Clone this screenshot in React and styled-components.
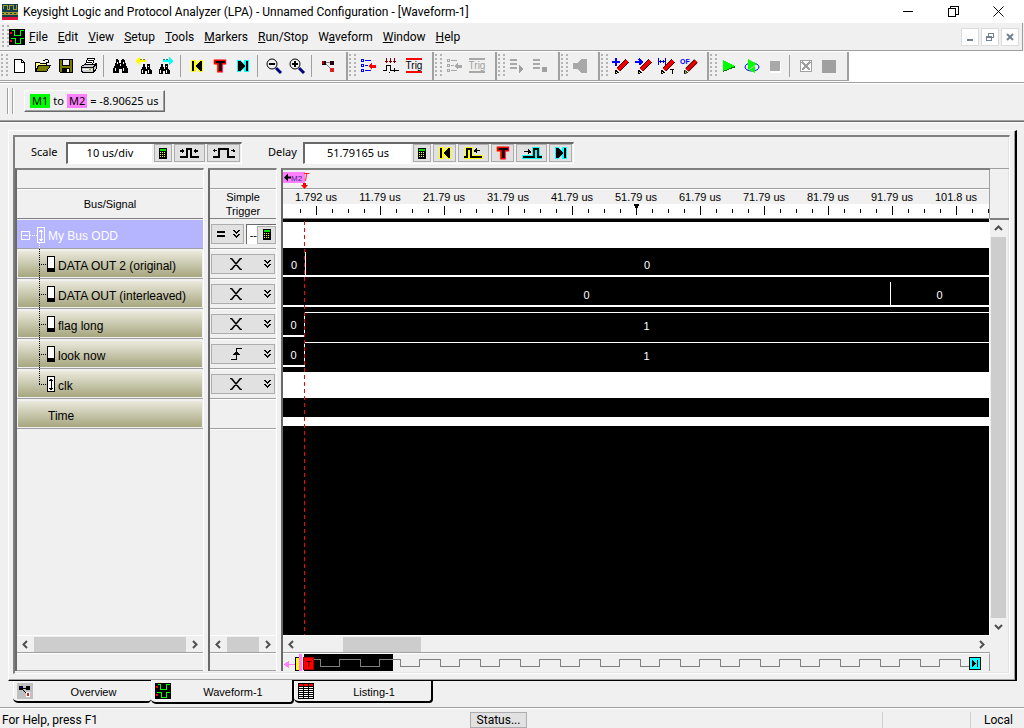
import React from "react";
import styled, { createGlobalStyle, css } from "styled-components";

const ui = 'Roboto, "Open Sans", sans-serif';
const tahoma = '"Noto Sans", "Open Sans", sans-serif';
const arial = '"Liberation Sans", Arial, sans-serif';

const Global = createGlobalStyle`
  * { box-sizing: border-box; }
  body { margin: 0; background: #f0f0f0; font: 12px/16px ${ui}; color: #000; }
  button, input { font: inherit; color: inherit; margin: 0; padding: 0; border: 0; border-radius: 0; }
`;

const Page = styled.div`
  display: flex;
  flex-direction: column;
  min-height: 100vh;
  background: #f0f0f0;
`;

/* ---------- title and menu ---------- */
const TitleBar = styled.header`
  display: flex;
  align-items: center;
  height: 23px;
  padding-left: 2px;
  background: #fff;
`;
const TitleText = styled.h1`
  flex: 1;
  margin: 0 0 0 5px;
  font-size: 12px;
  font-weight: 400;
  white-space: nowrap;
`;
const CaptionButton = styled.button`
  display: grid;
  place-items: center;
  width: 45px;
  height: 22px;
  background: none;
`;
const CaptionSet = styled.div`
  display: flex;
  margin-right: 3px;
`;
const MenuBar = styled.nav`
  display: flex;
  align-items: center;
  height: 28px;
  margin-right: 1px;
  padding-left: 2px;
  border-right: 1px solid #a0a0a0;
  border-bottom: 1px solid #a0a0a0;
`;
const MenuSet = styled.div`
  display: flex;
  flex: 1;
  gap: 10px;
  margin-left: 4px;
`;
const MenuItem = styled.button`
  background: none;
  white-space: nowrap;
`;
const MdiSet = styled.div`
  display: flex;
  gap: 2px;
  margin-right: 3px;
`;
const MdiButton = styled.button`
  display: grid;
  place-items: center;
  width: 18px;
  height: 18px;
  background: #fff;
  border: 1px solid #dcdcdc;
`;
const Grip = styled.span`
  flex: none;
  width: 7px;
  height: 24px;
  background: radial-gradient(circle at 1px 1px, #b4b4b4 1px, transparent 1px) 0 0 / 5px 4px;
`;

/* ---------- toolbars ---------- */
const Toolbars = styled.div`
  display: flex;
  height: 32px;
  background: #fff;
  border-bottom: 1px solid #a0a0a0;
`;
const Toolbar = styled.div`
  display: flex;
  align-items: center;
  flex: none;
  height: 29px;
  padding: 0 7px 0 1px;
  margin-top: 1px;
  background: #f0f0f0;
  border-right: 2px solid #a0a0a0;
  border-bottom: 1px solid #a0a0a0;
`;
const ToolButton = styled.button`
  display: grid;
  place-items: center;
  width: 23px;
  height: 24px;
  background: none;
`;
const Separator = styled.span`
  width: 1px;
  height: 22px;
  margin: 0 4px 0 3px;
  background: #a0a0a0;
`;
const MarkerBar = styled.div`
  display: flex;
  align-items: center;
  height: 38px;
  padding: 0 0 2px 7px;
  border-top: 1px solid #fff;
  border-bottom: 1px solid #a0a0a0;
  box-shadow: 0 1px #696969, 0 2px #fff;
`;
const DoubleBar = styled.span`
  width: 6px;
  height: 26px;
  border: solid #a0a0a0;
  border-width: 0 1px;
  box-shadow: inset 1px 0 #fff, 1px 0 #fff;
`;
const MarkerButton = styled.button`
  display: flex;
  align-items: center;
  gap: 3px;
  height: 22px;
  margin-left: 11px;
  padding: 0 5px;
  font: 11px/14px ${tahoma};
  background: #f0f0f0;
  border: 1px solid #fff;
  border-right: 1px solid #696969;
  border-bottom: 1px solid #696969;
  box-shadow: inset -1px -1px #a0a0a0;
  white-space: nowrap;
`;
const Tag = styled.span`
  padding: 0 2px;
  background: ${(p) => p.$color};
`;

/* ---------- document frame ---------- */
const Work = styled.main`
  display: flex;
  flex: 1;
  flex-direction: column;
  padding: 9px 7px 0 8px;
`;
const Frame = styled.section`
  display: flex;
  flex: 1;
  flex-direction: column;
  padding: 4px 5px 6px 4px;
  border: 1px solid #fff;
  border-right: 2px solid #000;
  border-bottom: 1px solid #000;
  box-shadow: inset -1px -1px #a0a0a0;
`;
const Panel = styled.div`
  display: flex;
  flex: 1;
  flex-direction: column;
  border: 2px solid #696969;
  border-top-color: #808080;
  border-left-color: #808080;
  border-right: 1px solid #fff;
  border-bottom: 1px solid #fff;
  box-shadow: inset -1px -1px #e3e3e3;
`;
const Controls = styled.div`
  display: flex;
  align-items: center;
  height: 31px;
  padding-left: 16px;
  font: 11px/14px ${tahoma};
`;
const Label = styled.label`
  width: 35px;
  padding-bottom: 2px;
`;
const FieldBox = styled.div`
  display: flex;
  align-items: center;
  gap: 2px;
  height: 22px;
  margin-right: 26px;
  padding: 1px;
  border: 1px solid #fff;
  border-top: 2px solid #696969;
  border-left: 2px solid #696969;
`;
const Field = styled.input`
  width: ${(p) => p.$w}px;
  height: 19px;
  margin: -1px 0 -1px -1px;
  padding-bottom: 2px;
  background: #fff;
  text-align: center;
`;
const SmallButton = styled.button`
  display: grid;
  place-items: center;
  flex: none;
  width: ${(p) => p.$w}px;
  height: 18px;
  background: #e1e1e1;
  border: 1px solid #adadad;
`;

/* ---------- three panes ---------- */
const Panes = styled.div`
  display: flex;
  flex: 1;
  padding-bottom: 2px;
`;
const Pane = styled.div`
  display: flex;
  flex-direction: column;
  flex: ${(p) => (p.$w ? `0 0 ${p.$w}px` : "1 1 0")};
  min-width: 0;
  margin-right: ${(p) => (p.$w ? 4 : 0)}px;
  border-top: 2px solid #808080;
  border-left: 2px solid #696969;
  border-right: ${(p) => (p.$w ? "1px solid #fff" : "0")};
`;
const Strip = styled.div`
  position: relative;
  height: 19px;
  border-bottom: 1px solid #a0a0a0;
`;
const Heading = styled.div`
  display: grid;
  place-items: center;
  height: 30px;
  border-top: 1px solid #fff;
  border-bottom: 1px solid #808080;
  font: 11px/14px ${arial};
  text-align: center;
`;
const Rows = styled.div`
  flex: 1;
`;
const SignalRow = styled.div`
  display: flex;
  align-items: center;
  height: 30px;
  padding: ${(p) => (p.$selected ? "1px 0 0" : "2px 1px 1px")};
  border-bottom: 1px solid #a0a0a0;
  background-clip: content-box;
  background-color: ${(p) => (p.$selected ? "#b4b4ff" : "transparent")};
  background-image: ${(p) => (p.$selected ? "none" : "linear-gradient(#f0efe4, #a3a37b)")};
  color: ${(p) => (p.$selected ? "#fff" : "#000")};
  font: 12px/16px ${arial};
  white-space: nowrap;
  overflow: hidden;
`;
const SignalName = styled.span`
  padding-top: 3px;
`;
const Tree = styled.svg`
  flex: none;
  height: 30px;
  width: ${(p) => p.$w}px;
  margin-left: ${(p) => (p.$flush ? 0 : -1)}px;
  shape-rendering: crispEdges;
`;
const TriggerRow = styled.div`
  display: flex;
  align-items: center;
  gap: 2px;
  height: 30px;
  padding: 1px 0 0 1px;
  border-bottom: 1px solid #a0a0a0;
  box-shadow: 0 1px #fff;
`;
const TriggerButton = styled.button`
  display: flex;
  align-items: center;
  justify-content: flex-end;
  gap: ${(p) => (p.$w < 40 ? 7 : 22)}px;
  width: ${(p) => p.$w}px;
  height: 20px;
  padding-right: 3px;
  background: #e1e1e1;
  border: 1px solid #adadad;
`;
const TriggerValue = styled.div`
  display: flex;
  align-items: center;
  flex: 1;
  height: 20px;
  background: #fff;
  border-top: 1px solid #696969;
  border-left: 1px solid #696969;
`;
const TinyInput = styled.input`
  width: 10px;
  background: #fff;
  font: 11px/14px ${arial};
  text-align: right;
`;
const ScrollBar = styled.div`
  display: flex;
  align-items: center;
  height: 18px;
  border-top: 1px solid #fff;
  border-bottom: 1px solid #a0a0a0;
`;
const ScrollArrow = styled.button`
  display: grid;
  place-items: center;
  flex: none;
  width: 17px;
  height: 17px;
  background: none;
`;
const Track = styled.div`
  flex: 1;
  height: 15px;
  padding-left: ${(p) => p.$start || 0}px;
`;
const Thumb = styled.div`
  width: ${(p) => (p.$w ? `${p.$w}px` : "100%")};
  height: 100%;
  background: #cdcdcd;
`;
const Foot = styled.div`
  height: 18px;
  border-top: 1px solid #fff;
  border-bottom: 1px solid #a0a0a0;
`;

/* ---------- waveform ---------- */
const WaveHead = styled.div`
  border-right: 1px solid #a0a0a0;
`;
const RulerLabels = styled.div`
  display: flex;
  height: 15px;
  padding-left: 1px;
  overflow: hidden;
  border-top: 1px solid #fff;
  font: 11px/14px ${arial};
`;
const RulerLabel = styled.span`
  flex: 0 0 64px;
  text-align: center;
  white-space: nowrap;
`;
const Ticks = styled.svg`
  display: block;
  width: 100%;
  height: 14px;
  background: #fff;
  shape-rendering: crispEdges;
`;
const MarkerFlag = styled.svg`
  position: absolute;
  left: 0;
  top: 2px;
  z-index: 1;
`;
const Plot = styled.div`
  position: relative;
  flex: 1;
  background: #000;
  border-top: 1px solid #808080;
  border-right: 1px solid #fff;
`;
const TriggerLine = styled.div`
  position: absolute;
  left: 21px;
  top: 2px;
  bottom: 0;
  width: 1px;
  background: repeating-linear-gradient(#f00 0 4px, transparent 4px 7px);
`;
const Lane = styled.div`
  display: flex;
  height: ${(p) => (p.$first ? 29 : 30)}px;
  padding-top: ${(p) => (p.$first ? 3 : 4)}px;
`;
const Segment = styled.div`
  flex: ${(p) => (p.$w ? `0 0 ${p.$w}` : "1 1 0")};
  height: 25px;
  font: 11px/26px ${arial};
  text-align: center;
  color: #fff;
  ${(p) => p.$edge && css`box-shadow: inset 1px 0 #fff;`}
  ${(p) => (p.$level === "high"
    ? css`border-top: 1px solid #fff;`
    : css`border-bottom: 2px solid #fff;`)}
`;
const FullBand = styled.div`
  flex: 1;
  height: 26px;
  background: #fff;
`;
const TimeBand = styled.div`
  height: 9px;
  margin-top: 19px;
  background: #fff;
`;
const OverviewStrip = styled.div`
  display: flex;
  height: 18px;
  border-right: 1px solid #a0a0a0;
  border-top: 1px solid #fff;
`;
const EndMark = styled.button`
  flex: none;
  width: 12px;
  height: 13px;
  margin: 3px 8px 0 0;
  background: none;
  line-height: 0;
`;
const Side = styled.div`
  display: flex;
  flex-direction: column;
  flex: 0 0 19px;
`;
const SideHead = styled.div`
  height: 52px;
  border-top: 1px solid #a0a0a0;
  border-bottom: 2px solid #808080;
`;
const VScroll = styled.div`
  display: flex;
  flex: 1;
  flex-direction: column;
  align-items: center;
  width: 17px;
`;
const VThumb = styled.div`
  flex: 1;
  width: 15px;
  background: #cdcdcd;
`;
const SideFoot = styled.div`
  height: 36px;
`;

/* ---------- tabs and status ---------- */
const Tabs = styled.div`
  display: flex;
  align-items: flex-start;
  height: 26px;
  padding-left: 5px;
`;
const Tab = styled.button`
  display: flex;
  align-items: center;
  width: ${(p) => p.$w}px;
  height: ${(p) => (p.$active ? 24 : 22)}px;
  margin-top: ${(p) => (p.$active ? -1 : 0)}px;
  padding-left: 4px;
  background: #f0f0f0;
  border: solid #000;
  border-width: 0 ${(p) => (p.$flat ? 0 : 2)}px 2px 0;
  border-radius: 0 0 4px 5px;
  box-shadow: inset 1px 0 #fff;
  font: 11px/16px ${arial};
`;
const TabText = styled.span`
  flex: 1;
  padding: 1px 0 0 3px;
  text-align: center;
`;
const StatusBar = styled.footer`
  display: flex;
  align-items: center;
  height: 21px;
  border-top: 1px solid #a0a0a0;
  box-shadow: inset 0 1px #fff;
  white-space: nowrap;
`;
const StatusCell = styled.div`
  flex: ${(p) => (p.$w ? `0 0 ${p.$w}px` : "1 1 0")};
  height: 16px;
  padding-left: 2px;
  margin-top: 3px;
  border-left: ${(p) => (p.$line ? "1px solid #d0d0d0" : "0")};
  text-align: ${(p) => (p.$line ? "center" : "left")};
`;
const StatusButton = styled.button`
  width: 57px;
  height: 16px;
  margin-top: 3px;
  background: #e1e1e1;
  border: 1px solid #adadad;
  line-height: 14px;
`;

/* ---------- drawings ---------- */
const Pic = ({ w = 18, h = 18, children, soft }) => (
  <svg width={w} height={h} viewBox={`0 0 ${w} ${h}`} shapeRendering={soft ? "auto" : "crispEdges"} fill="none" aria-hidden="true">
    {children}
  </svg>
);

const WaveIcon = () => (
  <Pic w={16} h={16}>
    <path fill="#000" d="M0 0h16v16H0z" />
    <path fill="#f00" d="M1 3h2v2H1zM1 11h2v2H1z" />
    <path stroke="#0f0" d="M3 1.500h2.500v5h6v-5H15M2 9.500h4.500v5h5v-5H15" />
  </Pic>
);
const AppIcon = () => (
  <Pic w={16} h={16}>
    <path fill="#123f4c" d="M0 0h16v13H0z" />
    <path fill="#e0173d" d="M0 13h16v3H0z" />
    <path stroke="#a8982c" d="M1.500 5V1.500h4v4h2v-4h4v4h3V1M0 8.500h2l2 2h2l2-2h2l2 2h2l2-2M0 10.500h2l2-2h2l2 2h2l2-2h2l2 2" />
  </Pic>
);
const Binoc = ({ x = 0, y = 0, s = 1 }) => (
  <g transform={`translate(${x} ${y}) scale(${s})`}>
    <path fill="#000" d="M5 2h2v1h1v3h2V3h1V2h2v1h1v3h1v3h1v2h1v5h-6v-4H8v4H2v-5h1V9h1V6h1z" />
    <path fill="#f0f0f0" d="M6 5h1v2H6zM12 5h1v2h-1zM4 11h1v3H4zM12 11h1v3h-1zM9 7h1v2H9z" />
  </g>
);
const Skip = ({ c, flip }) => (
  <Pic w={14} h={14}>
    <g transform={flip ? "translate(14 0) scale(-1 1)" : undefined}>
      <path fill={c} d="M1 1h5v3l4-3h3v12h-3l-4-3v3H1z" />
      <path fill="#000" d="M2 2h2v10H2zM5 7l5-5h2v10h-2z" />
    </g>
  </Pic>
);
const RedT = () => (
  <Pic w={16} h={16} soft>
    <text x="8" y="13" textAnchor="middle" fontFamily="DejaVu Sans" fontWeight="700" fontSize="14" fill="#000" stroke="#f00" strokeWidth="3" paintOrder="stroke">T</text>
  </Pic>
);
const Zoom = ({ plus }) => (
  <Pic soft>
    <circle cx="7" cy="7" r="5" stroke="#000" />
    <path stroke="#00007b" strokeWidth="3" d="M11 11l5 5" />
    <path stroke="#000" strokeWidth="2" d={plus ? "M4 7h6M7 4v6" : "M4 7h6"} />
  </Pic>
);
const NodesIcon = () => (
  <Pic w={16} h={16}>
    <path stroke="#808080" d="M5 4.500h5M5 5l6 6" />
    <path fill="#200010" d="M2 3h4v4H2zM10 3h4v4h-4z" />
    <path fill="#a00" d="M2 3h2v3H2z" />
    <path fill="#e02020" d="M10 10h4v4h-4z" />
  </Pic>
);
const ListArrow = ({ off }) => (
  <Pic>
    <path stroke={off ? "#a8a8a8" : "#00f"} d="M2.500 2.500h2v2h-2zM2.500 7.500h2v2h-2zM2.500 12.500h2v2h-2zM6 3.500h6M6 8.500h3M6 13.500h6" />
    <path fill={off ? "#a8a8a8" : "#f00"} d="M9 9l4-3v2h4v3h-4v2z" />
  </Pic>
);
const Trig = ({ off }) => (
  <Pic soft>
    <path fill={off ? "#a8a8a8" : "#f00"} d="M1 1h16v2H1zM1 14h16v2H1z" />
    <text x="9" y="12" textAnchor="middle" fontFamily="Liberation Sans" fontSize="10" fill={off ? "#a0a0a0" : "#000"}>Trig</text>
  </Pic>
);
const Edges = () => (
  <Pic>
    <path fill="#7b0000" d="M4 1h1v3h1v1H5v1H4V5H3V4h1zM8 1h1v3h1v1H9v1H8V5H7V4h1zM12 1h1v3h1v1h-1v1h-1V5h-1V4h1z" />
    <path stroke="#000" d="M1 13.500h3.500v-5h4v5H17M7 15.500h1M12.500 11v4" />
  </Pic>
);
const ListRun = ({ stop }) => (
  <Pic>
    <path fill="#a8a8a8" d="M2 2h7v2H2zM2 6h7v2H2zM2 10h7v2H2z" />
    <path fill="#a0a0a0" d={stop ? "M11 10h5v5h-5z" : "M11 8l5 4-5 4z"} />
  </Pic>
);
const Pencil = () => (
  <g>
    <path stroke="#500" strokeWidth="5" d="M7 13l9-9" />
    <path stroke="#e00" strokeWidth="3" d="M7 13l9-9" />
    <path fill="#ff0" stroke="#000" d="M4.500 16.500v-3l2 1 1 1z" />
  </g>
);
const Calc = () => (
  <Pic w={8} h={11}>
    <path fill="#000" d="M0 0h8v11H0z" />
    <path fill="#0d0" d="M1 1h6v2H1z" />
    <path fill="#ff0" d="M1 4h1v1H1zM3 4h1v1H3zM5 4h1v1H5zM1 6h1v1H1zM3 6h1v1H3zM5 6h1v1H5zM1 8h1v1H1zM3 8h1v1H3zM5 8h1v1H5z" />
  </Pic>
);
const PulseIcon = ({ wide }) => (
  <Pic w={24} h={12}>
    {wide ? (
      <>
        <path stroke="#000" strokeWidth="2" d="M1 10h6V2h9v8h7" />
        <path fill="#000" d="M0 4l3-2v1h2v1H3v1zM24 4l-3-2v1h-2v1h2v1z" />
      </>
    ) : (
      <>
        <path stroke="#000" strokeWidth="2" d="M2 10h7M9 11V2h4v9M13 10h8" />
        <path fill="#000" d="M7 4L4 2v1H2v2h2v1zM15 4l3-2v1h2v2h-2v1z" />
      </>
    )}
  </Pic>
);
const SnapIcon = ({ c, right }) => (
  <Pic w={22} h={14}>
    <path stroke={c} strokeWidth="4" d={right ? "M1 11h12V3h4v8h4" : "M1 11h3V3h4v8h12"} />
    <path stroke="#000" strokeWidth="2" d={right ? "M2 11h11V3h4v8h4" : "M1 11h3V3h4v8h11"} />
    <path fill="#000" d={right ? "M3 5h4V3l4 3-4 2V6H3z" : "M17 4h-3V2l-4 3 4 2V5h3z"} />
  </Pic>
);
const Chevrons = () => (
  <Pic w={7} h={9}>
    <path fill="#000" d="M0 0h2v1h1v1h1V1h1V0h2v1H6v1H5v1H4v1H3V3H2V2H1V1H0zM0 4h2v1h1v1h1V5h1V4h2v1H6v1H5v1H4v1H3V7H2V6H1V5H0z" />
  </Pic>
);
const Cross = () => (
  <Pic w={12} h={12} soft><path stroke="#000" strokeWidth="1.500" d="M1.500 .5L10.500 11.500M10.500 .5L1.500 11.500M0 .5h2.500M9.500 .5H12M0 11.500h2.500M9.500 11.500H12" /></Pic>
);
const Rising = () => (
  <Pic w={12} h={12}><path stroke="#000" d="M1 11.500h5.500v-11H12" /><path fill="#000" d="M3 7h7L6.500 3z" /></Pic>
);
const Equals = () => (
  <Pic w={9} h={8}><path fill="#000" d="M0 1h8v2H0zM0 5h8v2H0z" /></Pic>
);
const Arrow = ({ d }) => (
  <Pic w={9} h={9} soft>
    <path stroke="#505050" strokeWidth="2" d={{ left: "M6 1L2.500 4.500 6 8", right: "M3 1l3.500 3.500L3 8", up: "M1 6l3.500-3.500L8 6", down: "M1 3l3.500 3.500L8 3" }[d]} />
  </Pic>
);
const BusBox = ({ x, y, color, arrow, fill = "none" }) => (
  <g>
    <path stroke={color} fill={fill} d={`M${x + 0.5} ${y + 0.5}h7v15h-7z`} />
    {arrow ? (
      <path stroke={color} d={`M${x + 4} ${y + 3}v11M${x + 2} ${y + 4.5}h4M${x + 3} ${y + 3.5}h2M${x + 2} ${y + 12.5}h4M${x + 3} ${y + 13.5}h2`} />
    ) : (
      <path fill={color} d={`M${x} ${y + 12}h8v4h-8z`} />
    )}
  </g>
);
const NodesTab = () => (
  <Pic w={16} h={16}>
    <path fill="#c0c0c0" d="M0 0h16v16H0z" />
    <path stroke="#000" d="M5 5.500h5M5 6l5 5" />
    <path fill="#000" d="M2 3h4v4H2zM9 3h4v4H9z" />
    <path fill="#00a" d="M3 4h2v1H3z" />
    <path fill="#e02020" stroke="#fff" d="M9.500 9.500h3v4h-3z" />
  </Pic>
);
const FindStep = ({ next }) => (
  <Pic>
    <path fill={next ? "#0ff" : "#ff0"} d={next ? "M6 3h6V0l5 4-5 4V5H6z" : "M12 3H6V0L1 4l5 4V5h6z"} />
    <path stroke={next ? "#088" : "#880"} strokeDasharray="2 1" d="M6 2.500h6" />
    <Binoc x={next ? 0 : 5} y={5} s={0.75} />
  </Pic>
);

/* ---------- data ---------- */
const menus = [["", "F", "ile"], ["", "E", "dit"], ["", "V", "iew"], ["", "S", "etup"], ["", "T", "ools"], ["", "M", "arkers"], ["", "R", "un/Stop"], ["W", "a", "veform"], ["", "W", "indow"], ["", "H", "elp"]];

const tools = [
  [
    ["New", <Pic key="i"><path fill="#fff" stroke="#000" d="M3.500 2.500h7l3 3v10h-10zM10.500 2.500v3h3" /></Pic>],
    ["Open", <Pic key="i"><path fill="#ffff84" stroke="#000" d="M1.500 14.500v-9h4l1 1h6v2" /><path fill="#7b7b00" stroke="#000" d="M1.500 14.500l3-6h12l-4 6z" /><path stroke="#000" d="M9 3.500h2M11 2.500h3M14.500 3v3M12 5.500h3" /></Pic>],
    ["Save", <Pic key="i"><path fill="#7b7b00" stroke="#000" d="M2.500 2.500h13v13h-12l-1-1z" /><path fill="#f0f0f0" stroke="#000" d="M5.500 2.500h7v6h-7z" /><path fill="#000" d="M5 11h8v5H5z" /><path fill="#fff" d="M10 12h2v3h-2z" /></Pic>],
    ["Print", <Pic key="i"><path fill="#fff" stroke="#000" d="M5.500 7.500l2-6h7l-2 6z" /><path stroke="#000" d="M8 3.500h5M7 5.500h5" /><path fill="#ccc" stroke="#000" d="M1.500 9.500l3-2h10l2-1v5l-3 4h-11l-1-2zM2 10.500h11M13.500 15v-5l3-3" /><path stroke="#fff" d="M3 12.500h9" /><path stroke="#990" d="M9 12.500h2" /></Pic>],
    null,
    ["Find", <Pic key="i"><Binoc /></Pic>],
    ["Find previous", <FindStep key="i" />],
    ["Find next", <FindStep key="i" next />],
    null,
    ["Go to start", <Skip key="i" c="#ff0" />],
    ["Go to trigger", <RedT key="i" />],
    ["Go to end", <Skip key="i" c="#0ff" flip />],
    null,
    ["Zoom out", <Zoom key="i" />],
    ["Zoom in", <Zoom key="i" plus />],
    null,
    ["Overview window", <NodesIcon key="i" />],
  ],
  [["Bus setup", <ListArrow key="i" />], ["Sampling", <Edges key="i" />], ["Trigger", <Trig key="i" />]],
  [["Bus setup 2", <ListArrow key="i" off />], ["Trigger 2", <Trig key="i" off />]],
  [["Run list", <ListRun key="i" />], ["Stop list", <ListRun key="i" stop />]],
  [["Sound", <Pic key="i"><path fill="#a8a8a8" d="M2 6h4l4-4h6v14h-6l-4-4H2z" /></Pic>]],
  [
    ["New marker", <Pic key="i"><Pencil /><path fill="#00f" d="M4 1h2v3h3v2H6v3H4V6H1V4h3z" /></Pic>],
    ["Go to marker", <Pic key="i"><Pencil /><path stroke="#00f" strokeWidth="2" d="M1 5h6M5 2l3 3-3 3" /></Pic>],
    ["Interval", <Pic key="i"><Pencil /><path stroke="#00c" d="M1.500 1v7M8.500 1v7M2 4.500h7M3.500 3v3M6.500 3v3" /><path stroke="#000" d="M13 12.500h4M15.500 13v4" /></Pic>],
    ["Occurrences", <Pic key="i" soft><Pencil /><text x="0" y="7" fontFamily="Liberation Sans" fontWeight="700" fontSize="7" fill="#00f">OF</text></Pic>],
  ],
  [
    ["Run", <Pic key="i"><path fill="#007b00" d="M3 4l13 6-13 5z" /><path fill="#0f0" d="M3 3l12 6-12 5z" /></Pic>],
    ["Run repetitive", <Pic key="i" soft><ellipse cx="9" cy="10" rx="7" ry="4" stroke="#00f" /><path fill="#0f0" d="M5 2l9 5-9 6zM12 9v7l-6-3z" /></Pic>],
    ["Stop", <Pic key="i"><path fill="#fff" d="M4 5h11v11H4z" /><path fill="#a8a8a8" d="M4 4h10v10H4z" /></Pic>],
    null,
    ["Cancel", <Pic key="i"><path fill="#fff" stroke="#a0a0a0" d="M3.500 3.500h11v11h-11z" /><path stroke="#a0a0a0" strokeWidth="2" d="M5 5l8 8M13 5l-8 8" /></Pic>],
    ["Halt", <Pic key="i"><path fill="#a0a0a0" d="M2 3h14v13H2z" /></Pic>],
  ],
];

const signals = [["DATA OUT 2 (original)"], ["DATA OUT (interleaved)"], ["flag long"], ["look now"], ["clk", true]];
const times = ["1.792 us", "11.79 us", "21.79 us", "31.79 us", "41.79 us", "51.79 us", "61.79 us", "71.79 us", "81.79 us", "91.79 us", "101.8 us"];

const HScroll = ({ start, size }) => (
  <ScrollBar>
    <ScrollArrow aria-label="Scroll left"><Arrow d="left" /></ScrollArrow>
    <Track $start={start}><Thumb $w={size} /></Track>
    <ScrollArrow aria-label="Scroll right"><Arrow d="right" /></ScrollArrow>
  </ScrollBar>
);

const TimeRuler = () => (
  <Ticks aria-hidden="true">
    <defs>
      <pattern id="ticks" x="1" width="64" height="14" patternUnits="userSpaceOnUse">
        <path fill="#000" d="M0 5h1v4H0zM16 5h1v4h-1zM32 2h1v9h-1zM48 5h1v4h-1z" />
      </pattern>
    </defs>
    <rect x="2" width="100%" height="14" fill="url(#ticks)" />
    <path fill="#000" d="M351 0h5v2h-1v2h-3V2h-1z" />
  </Ticks>
);

const OverviewDrawing = () => (
  <svg width="100%" height="17" shapeRendering="crispEdges" aria-hidden="true">
    <defs>
      <pattern id="clock" x="17" width="40" height="17" patternUnits="userSpaceOnUse">
        <path stroke="#808080" fill="none" d="M0 5.500h20.500v7h19v-7H40" />
      </pattern>
    </defs>
    <rect x="21" width="89" height="17" fill="#000" />
    <rect x="30" width="100%" height="17" fill="url(#clock)" />
    <path stroke="#ff80ff" fill="#ff80ff" d="M1 10.500h14M5.500 7.500v6l-4-3z" />
    <path stroke="#000" fill="#ff0" d="M12.500 3.500h5v13h-5z" />
    <rect x="16" width="3" height="17" fill="#ff80ff" />
    <path stroke="#a00" fill="#f00" d="M20.500 3.500h10v12h-10z" />
    <text x="25.500" y="13" textAnchor="middle" fontFamily="Liberation Sans" fontSize="9" fill="#400">T</text>
  </svg>
);

export default function App() {
  return (
    <>
      <Global />
      <Page>
        <TitleBar>
          <AppIcon />
          <TitleText>Keysight Logic and Protocol Analyzer (LPA) - Unnamed Configuration - [Waveform-1]</TitleText>
          <CaptionSet>
            <CaptionButton aria-label="Minimize"><Pic w={11} h={11}><path stroke="#000" d="M0 5.500h10" /></Pic></CaptionButton>
            <CaptionButton aria-label="Restore"><Pic w={11} h={11}><path stroke="#000" d="M.5 2.500h7v8h-7zM2.500 2V.5h8v8H8" /></Pic></CaptionButton>
            <CaptionButton aria-label="Close"><Pic w={11} h={11} soft><path stroke="#000" d="M.5 .5l10 10M10.500 .5l-10 10" /></Pic></CaptionButton>
          </CaptionSet>
        </TitleBar>
        <MenuBar>
          <Grip />
          <WaveIcon />
          <MenuSet>
            {menus.map(([a, k, b]) => <MenuItem key={a + k + b}>{a}<u>{k}</u>{b}</MenuItem>)}
          </MenuSet>
          <MdiSet>
            <MdiButton aria-label="Minimize window"><Pic w={10} h={10}><path fill="#72828f" d="M2 7h6v2H2z" /></Pic></MdiButton>
            <MdiButton aria-label="Restore window"><Pic w={10} h={10}><path stroke="#72828f" d="M1.500 5.500h5v3h-5zM1 4.500h6M3.500 4V1.500h5v4H7M3 1.500h6" /></Pic></MdiButton>
            <MdiButton aria-label="Close window"><Pic w={10} h={10} soft><path stroke="#72828f" strokeWidth="2" d="M2 2l6 6M8 2L2 8" /></Pic></MdiButton>
          </MdiSet>
        </MenuBar>
        <Toolbars>
          {tools.map((group, g) => (
            <Toolbar key={g}>
              <Grip />
              {group.map((t, i) => (t ? <ToolButton key={t[0]} aria-label={t[0]}>{t[1]}</ToolButton> : <Separator key={i} />))}
            </Toolbar>
          ))}
        </Toolbars>
        <MarkerBar>
          <DoubleBar />
          <MarkerButton><Tag $color="#00ff00">M1</Tag>to<Tag $color="#ff80ff">M2</Tag><span>= -8.90625 us</span></MarkerButton>
        </MarkerBar>
        <Work>
          <Frame>
            <Panel>
              <Controls>
                <Label htmlFor="scale">Scale</Label>
                <FieldBox>
                  <Field id="scale" $w={84} defaultValue="10 us/div" />
                  <SmallButton $w={18} aria-label="Scale keypad"><Calc /></SmallButton>
                  <SmallButton $w={31} aria-label="Zoom in time"><PulseIcon /></SmallButton>
                  <SmallButton $w={33} aria-label="Zoom out time"><PulseIcon wide /></SmallButton>
                </FieldBox>
                <Label htmlFor="delay">Delay</Label>
                <FieldBox>
                  <Field id="delay" $w={106} defaultValue="51.79165 us" />
                  <SmallButton $w={18} aria-label="Delay keypad"><Calc /></SmallButton>
                  <SmallButton $w={23} aria-label="Start"><Skip c="#ff0" /></SmallButton>
                  <SmallButton $w={31} aria-label="Previous edge"><SnapIcon c="#ff0" /></SmallButton>
                  <SmallButton $w={23} aria-label="Trigger point"><RedT /></SmallButton>
                  <SmallButton $w={31} aria-label="Next edge"><SnapIcon c="#0ff" right /></SmallButton>
                  <SmallButton $w={23} aria-label="End"><Skip c="#0ff" flip /></SmallButton>
                </FieldBox>
              </Controls>
              <Panes>
                <Pane $w={189}>
                  <Strip />
                  <Heading>Bus/Signal</Heading>
                  <Rows>
                    <SignalRow $selected>
                      <Tree $w={31} $flush>
                        <path stroke="#fff" fill="none" d="M4.500 12.500h8v8h-8zM6 16.500h5" />
                        <path stroke="#fff" strokeDasharray="1 1" d="M13 16.500h7M22.500 24v6" />
                        <BusBox x={20} y={8} color="#fff" arrow />
                      </Tree>
                      <SignalName>My Bus ODD</SignalName>
                    </SignalRow>
                    {signals.map(([name, last]) => (
                      <SignalRow key={name}>
                        <Tree $w={41}>
                          <path stroke="#000" strokeDasharray="1 1" d={last ? "M22.500 0v15M22 15.500h8" : "M22.500 0v30M22 15.500h8"} />
                          <BusBox x={30} y={7} color="#000" fill="#fff" arrow={last} />
                        </Tree>
                        <SignalName>{name}</SignalName>
                      </SignalRow>
                    ))}
                    <SignalRow><Tree $w={31} /><SignalName>Time</SignalName></SignalRow>
                  </Rows>
                  <HScroll />
                  <Foot />
                </Pane>
                <Pane $w={69}>
                  <Strip />
                  <Heading>Simple<br />Trigger</Heading>
                  <Rows>
                    <TriggerRow>
                      <TriggerButton $w={33} aria-label="Operator"><Equals /><Chevrons /></TriggerButton>
                      <TriggerValue>
                        <TinyInput aria-label="Trigger value" defaultValue="--" />
                        <SmallButton $w={19} aria-label="Value keypad"><Calc /></SmallButton>
                      </TriggerValue>
                    </TriggerRow>
                    {["x1", "x2", "x3", "rise", "x4"].map((k) => (
                      <TriggerRow key={k}>
                        <TriggerButton $w={64} aria-label="Trigger condition">{k === "rise" ? <Rising /> : <Cross />}<Chevrons /></TriggerButton>
                      </TriggerRow>
                    ))}
                    <TriggerRow />
                  </Rows>
                  <HScroll />
                  <Foot />
                </Pane>
                <Pane>
                  <WaveHead>
                    <Strip>
                      <MarkerFlag width="28" height="18">
                        <rect width="22" height="11" fill="#ff80ff" />
                        <path fill="#000" d="M1 5.500l4-4v3h3v2H5v3z" />
                        <text x="8" y="9" fontFamily="Liberation Sans" fontSize="8" fill="#40208c">M2</text>
                        <text x="20" y="9" fontFamily="Liberation Sans" fontSize="10" fontStyle="italic" fill="#f00">T</text>
                        <path fill="#f00" d="M20 11h3v2h2l-3.500 4L18 13h2z" />
                      </MarkerFlag>
                    </Strip>
                    <RulerLabels>{times.map((t) => <RulerLabel key={t}>{t}</RulerLabel>)}</RulerLabels>
                    <TimeRuler />
                  </WaveHead>
                  <Plot>
                    <Lane $first><FullBand /></Lane>
                    <Lane><Segment $w="22px">0</Segment><Segment $edge>0</Segment></Lane>
                    <Lane><Segment $w="86%">0</Segment><Segment $edge>0</Segment></Lane>
                    {["flag", "look"].map((k) => (
                      <Lane key={k}><Segment $w="21px">0</Segment><Segment $edge $level="high">1</Segment></Lane>
                    ))}
                    <Lane><FullBand /></Lane>
                    <TimeBand />
                    <TriggerLine />
                  </Plot>
                  <HScroll start={43} size={78} />
                  <OverviewStrip>
                    <OverviewDrawing />
                    <EndMark aria-label="End of data"><Pic w={12} h={13}><path fill="#0ff" stroke="#000" d="M.5 .5h11v12H.5z" /><path fill="#000" d="M3 3l4 3.500L3 10zM8 3h1v7H8z" /></Pic></EndMark>
                  </OverviewStrip>
                </Pane>
                <Side>
                  <SideHead />
                  <VScroll>
                    <ScrollArrow aria-label="Scroll up"><Arrow d="up" /></ScrollArrow>
                    <VThumb />
                    <ScrollArrow aria-label="Scroll down"><Arrow d="down" /></ScrollArrow>
                  </VScroll>
                  <SideFoot />
                </Side>
              </Panes>
            </Panel>
          </Frame>
          <Tabs>
            <Tab $w={138} $flat><NodesTab /><TabText>Overview</TabText></Tab>
            <Tab $w={143} $active><WaveIcon /><TabText>Waveform-1</TabText></Tab>
            <Tab $w={139}>
              <Pic w={16} h={16}>
                <path fill="#000" d="M0 0h16v16H0z" />
                <path fill="#f00" d="M1 1h4v2H1zM6 1h4v2H6zM11 1h4v2h-4z" />
                <path stroke="#fff" strokeDasharray="4 1" d="M1 4.500h14M1 6.500h14M1 8.500h14M1 10.500h14M1 12.500h14M1 14.500h14" />
              </Pic>
              <TabText>Listing-1</TabText>
            </Tab>
          </Tabs>
        </Work>
        <StatusBar>
          <StatusCell>For Help, press F1</StatusCell>
          <StatusButton>Status...</StatusButton>
          <StatusCell $w={355} />
          <StatusCell $w={88} $line />
          <StatusCell $w={54} $line>Local</StatusCell>
        </StatusBar>
      </Page>
    </>
  );
}
